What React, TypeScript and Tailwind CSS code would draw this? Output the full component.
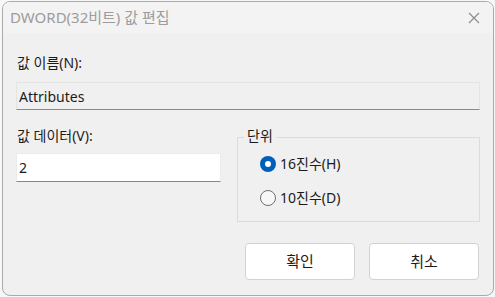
export default function App() {
  const font = { fontFamily: '"Noto Sans", "Noto Sans CJK KR", sans-serif' };
  return (
    <div className="w-[495px] h-[297px] bg-[#f7f7f7] pt-px pl-[2px]" style={font}>
      <div className="w-[492px] h-[295px] rounded-lg border border-[#ababab] bg-[#f0f0f0] overflow-hidden flex flex-col">
        {/* Title bar */}
        <div className="h-[31px] bg-[#f3f3f3] flex items-center justify-between pl-[7px] pr-[13px]">
          <span className="text-[15px] text-[#9c9c9c] leading-none">DWORD(32비트) 값 편집</span>
          <svg width="12" height="12" viewBox="0 0 12 12" fill="none">
            <path d="M1 1l10 10M11 1L1 11" stroke="#8a8a8a" strokeWidth="1.1" />
          </svg>
        </div>

        {/* Body */}
        <div className="flex flex-col px-[13px] pt-[22px] text-[#1b1b1b]">
          <div className="text-[14px] leading-[16px] pl-px">값 이름(N):</div>
          <div className="mt-[11px] h-[28px] border border-[#e4e4e4] border-b-[#8a8a8a] bg-[#f0f0f0] flex items-center pl-[2px] text-[14px]">
            Attributes
          </div>

          <div className="mt-[18px] flex gap-4">
            <div className="w-[205px] flex flex-col">
              <div className="text-[14px] leading-[16px] pl-px">값 데이터(V):</div>
              <div className="mt-[9px] h-[29px] border border-[#ebebeb] border-b-[#868686] bg-white flex items-center pl-[2px] text-[14px]">
                2
              </div>
            </div>

            <div className="flex-1 pt-[9px]">
              <div className="relative h-[85px] border border-[#dcdcdc] pl-[22px] pt-[18px] flex flex-col gap-[18px]">
                <span className="absolute -top-[10px] left-[6px] bg-[#f0f0f0] px-[3px] text-[14px] leading-[16px]">단위</span>
                <label className="flex items-center gap-[4px] text-[14px] leading-[16px]">
                  <span className="w-4 h-4 rounded-full bg-[#005fb8] flex items-center justify-center">
                    <span className="w-[6px] h-[6px] rounded-full bg-white" />
                  </span>
                  16진수(H)
                </label>
                <label className="flex items-center gap-[4px] text-[14px] leading-[16px]">
                  <span className="w-4 h-4 rounded-full border border-[#6f6f6f] bg-[#f7f7f7]" />
                  10진수(D)
                </label>
              </div>
            </div>
          </div>

          <div className="mt-[21px] flex justify-end gap-[14px] pr-px">
            <button className="w-[110px] h-[37px] rounded-[4px] border border-[#d2d2d2] bg-white text-[15px] text-[#1b1b1b]">
              확인
            </button>
            <button className="w-[110px] h-[37px] rounded-[4px] border border-[#d2d2d2] bg-white text-[15px] text-[#1b1b1b]">
              취소
            </button>
          </div>
        </div>
      </div>
    </div>
  );
}
